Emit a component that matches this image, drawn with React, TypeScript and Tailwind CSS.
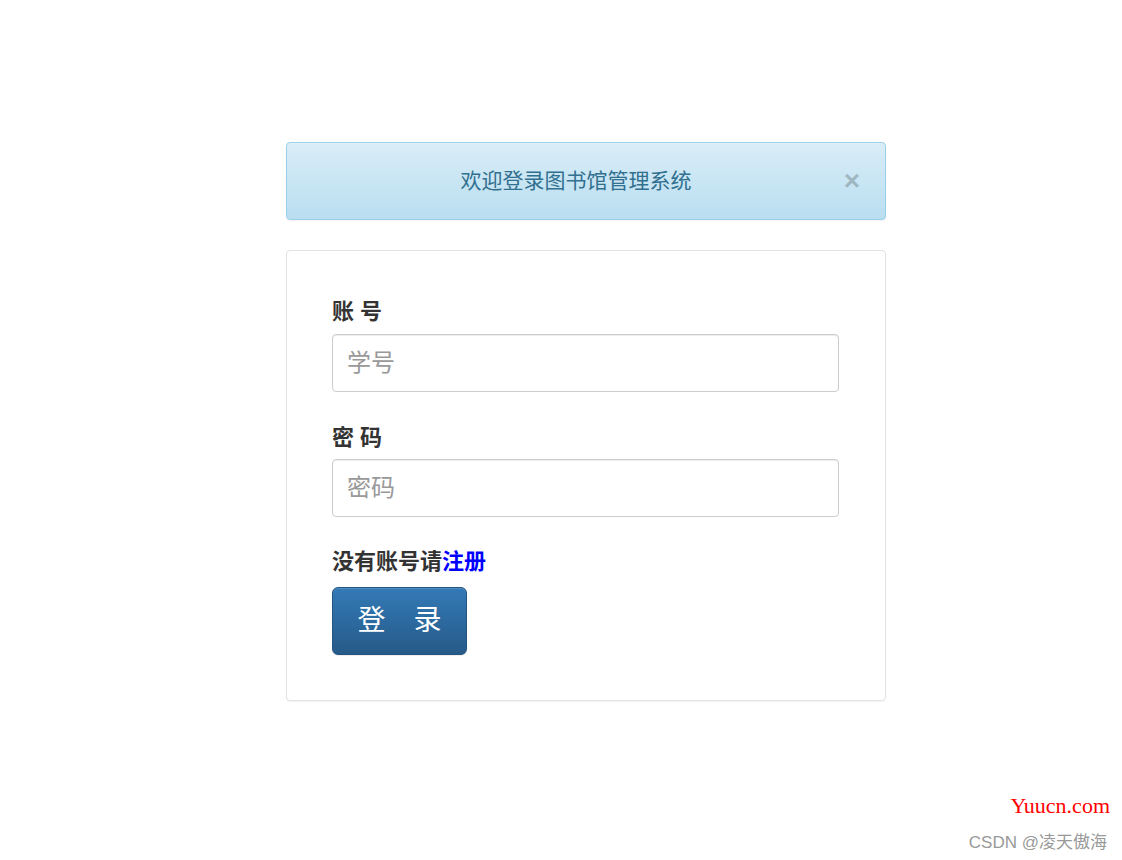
import { useState } from 'react';

const FONT = '[font-family:"Helvetica_Neue",Helvetica,Arial,"Noto_Sans_CJK_SC",sans-serif]';

export default function App() {
  const [open, setOpen] = useState(true);
  const [account, setAccount] = useState('');
  const [password, setPassword] = useState('');

  return (
    <div className={`relative min-h-[860px] w-full bg-white ${FONT}`}>
      <div className="ml-[286px] w-[600px] pt-[142px]">
        {open && (
          <div className="mb-[30px] flex h-[78px] items-center rounded-[4px] border border-[#9acfea] bg-gradient-to-b from-[#d9edf7] to-[#b9def0] px-5 shadow-[inset_0_1px_0_rgba(255,255,255,0.25),0_1px_2px_rgba(0,0,0,0.05)]">
            <span className="flex-1 pl-[6px] text-center text-[21px] text-[#31708f]">欢迎登录图书馆管理系统</span>
            <button
              type="button"
              onClick={() => setOpen(false)}
              className="w-[26px] text-[28px] font-bold leading-none text-[#000] opacity-20"
            >
              ×
            </button>
          </div>
        )}

        <div className="rounded-[4px] border border-[#e3e3e3] bg-white pb-[45px] pl-[45px] pr-[46px] pt-[47px] shadow-[0_1px_1px_rgba(0,0,0,0.05)]">
          <label className="block text-[22px] font-bold leading-[28px] text-[#333]">账 号</label>
          <input
            value={account}
            onChange={(event) => setAccount(event.target.value)}
            placeholder="学号"
            className="mt-2 block h-[58px] w-full rounded-[4px] border border-[#ccc] px-[14px] text-[24px] text-[#555] shadow-[inset_0_1px_1px_rgba(0,0,0,0.075)] outline-none placeholder:text-[#999]"
          />

          <label className="mt-[32px] block text-[22px] font-bold leading-[28px] text-[#333]">密 码</label>
          <input
            type="password"
            value={password}
            onChange={(event) => setPassword(event.target.value)}
            placeholder="密码"
            className="mt-[7px] block h-[58px] w-full rounded-[4px] border border-[#ccc] px-[14px] text-[24px] text-[#555] shadow-[inset_0_1px_1px_rgba(0,0,0,0.075)] outline-none placeholder:text-[#999]"
          />

          <div className="mt-[31px] text-[22px] font-bold leading-[28px] text-[#333]">
            没有账号请<a href="#" className="text-[#0000ff]">注册</a>
          </div>

          <button
            type="button"
            className="mt-[11px] flex h-[68px] w-[135px] items-center justify-center rounded-[6px] border border-[#245580] bg-gradient-to-b from-[#337ab7] to-[#265a88] text-[28px] text-white shadow-[inset_0_1px_0_rgba(255,255,255,0.15),0_1px_1px_rgba(0,0,0,0.075)]"
          >
            登　录
          </button>
        </div>
      </div>

      <div className="absolute right-[12px] top-[789px] [font-family:'Liberation_Serif',serif] text-[22px] text-[#ff0000]">
        Yuucn.com
      </div>
      <div className="absolute right-[15px] top-[830px] text-[17px] text-[#999]">CSDN @凌天傲海</div>
    </div>
  );
}
